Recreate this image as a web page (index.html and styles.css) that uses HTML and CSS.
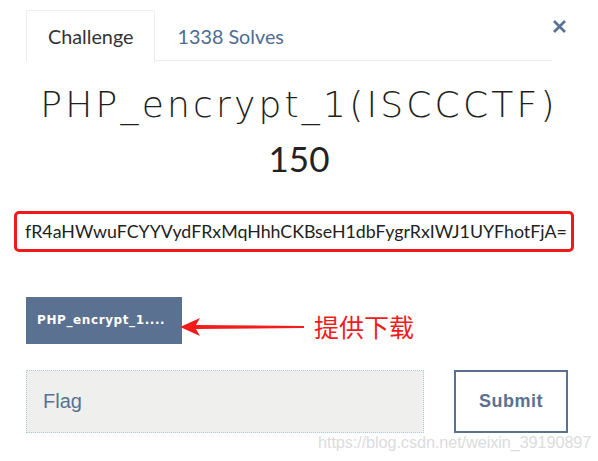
FILE: index.html
```html
<!DOCTYPE html>
<html>
<head>
<meta charset="utf-8">
<link rel="stylesheet" href="styles.css">
</head>
<body>
<div class="modal">
  <div class="header">
    <ul class="tabs">
      <li class="tab active">Challenge</li>
      <li class="tab">1338 Solves</li>
    </ul>
    <span class="close">
      <svg width="15" height="15" viewBox="0 0 15 15"><path d="M2 2 L13 13 M13 2 L2 13" stroke="#5a7191" stroke-width="2.6" stroke-linecap="butt"/></svg>
    </span>
  </div>
  <h1 class="title">PHP_encrypt_1(ISCCCTF)</h1>
  <h2 class="score">150</h2>
  <p class="desc">fR4aHWwuFCYYVydFRxMqHhhCKBseH1dbFygrRxIWJ1UYFhotFjA=</p>
  <div class="files">
    <a class="file-btn">PHP_encrypt_1....</a>
    <svg class="arrow" width="126" height="20" viewBox="0 0 126 20"><path d="M0 10 L20 1 L16 8 L124 9 L124 11 L16 12 L20 19 Z" fill="#f21c1c"/></svg>
    <span class="note">提供下载</span>
  </div>
  <div class="submit-row">
    <div class="flag-input">Flag</div>
    <button class="submit">Submit</button>
  </div>
  <div class="watermark">https://blog.csdn.net/weixin_39190897</div>
</div>
</body>
</html>
```

FILE: styles.css
```css
html, body {
  margin: 0;
  padding: 0;
  background: #fff;
}
body {
  font-family: Lato, "Noto Sans", sans-serif;
  color: #333;
  width: 598px;
  height: 461px;
  overflow: hidden;
}
.modal {
  position: relative;
  height: 461px;
}
.header {
  display: flex;
  align-items: flex-start;
  margin: 10px 31px 0 26px;
}
.tabs {
  list-style: none;
  margin: 0;
  padding: 0;
  display: flex;
  flex: 1;
  border-bottom: 1px solid #ececec;
  height: 50px;
}
.tab {
  font-size: 19.8px;
  line-height: 24px;
  padding: 13px 21px 13px 21px;
  border: 1px solid transparent;
  border-bottom: none;
  color: #4f6c91;
  height: 24px;
}
.tab.active {
  color: #333;
  border-color: #ececec;
  background: #fff;
  height: 25px;
  border-radius: 2px 2px 0 0;
}
.close {
  display: block;
  margin-top: 9px;
  width: 15px;
  height: 15px;
}
.close svg { display: block; }
.title {
  margin: 22px 0 0;
  text-align: center;
  font-family: "DejaVu Sans", "Open Sans", sans-serif;
  font-weight: 200;
  font-size: 36px;
  line-height: 44px;
  color: #1e1e1e;
  letter-spacing: 3.2px;
  white-space: nowrap;
}
.score {
  margin: 11px 0 0;
  text-align: center;
  font-weight: 400;
  font-size: 35px;
  line-height: 40px;
  color: #222;
}
.desc {
  margin: 33px 24px 0 14px;
  border: 3px solid #f01a1a;
  border-radius: 5px;
  font-size: 17.8px;
  line-height: 35px;
  padding: 0 0 0 8px;
  color: #222;
  white-space: nowrap;
}
.files {
  display: flex;
  align-items: flex-start;
  margin: 45px 0 0 26px;
}
.file-btn {
  display: block;
  width: 156px;
  height: 47px;
  line-height: 47px;
  background: #5a7191;
  color: #fff;
  font-family: "DejaVu Sans", sans-serif;
  font-size: 12px;
  font-weight: 600;
  letter-spacing: 0.6px;
  padding-left: 11px;
  box-sizing: border-box;
}
.arrow {
  display: block;
  margin: 20px 0 0 -2px;
}
.note {
  display: block;
  margin: 13px 0 0 8px;
  font-family: "Noto Sans CJK SC", sans-serif;
  font-size: 25px;
  color: #f21c1c;
  line-height: 32px;
}
.submit-row {
  display: flex;
  gap: 30px;
  margin: 26px 0 0 26px;
}
.flag-input {
  width: 398px;
  height: 63px;
  box-sizing: border-box;
  background: #efefee;
  border: 1px dotted #a9cbe0;
  font-family: "Liberation Sans", Arial, sans-serif;
  font-size: 20px;
  color: #5a7191;
  line-height: 61px;
  padding-left: 16px;
}
.submit {
  width: 114px;
  height: 63px;
  box-sizing: border-box;
  background: #fff;
  border: 2px solid #5a7191;
  color: #5a7191;
  font-family: "Liberation Sans", Arial, sans-serif;
  font-weight: 700;
  font-size: 18px;
  letter-spacing: 0.5px;
  padding: 0;
}
.watermark {
  position: absolute;
  left: 318px;
  top: 423px;
  font-family: "Liberation Sans", Arial, sans-serif;
  font-size: 16.3px;
  color: #dcdcdc;
  letter-spacing: -0.1px;
}
```
